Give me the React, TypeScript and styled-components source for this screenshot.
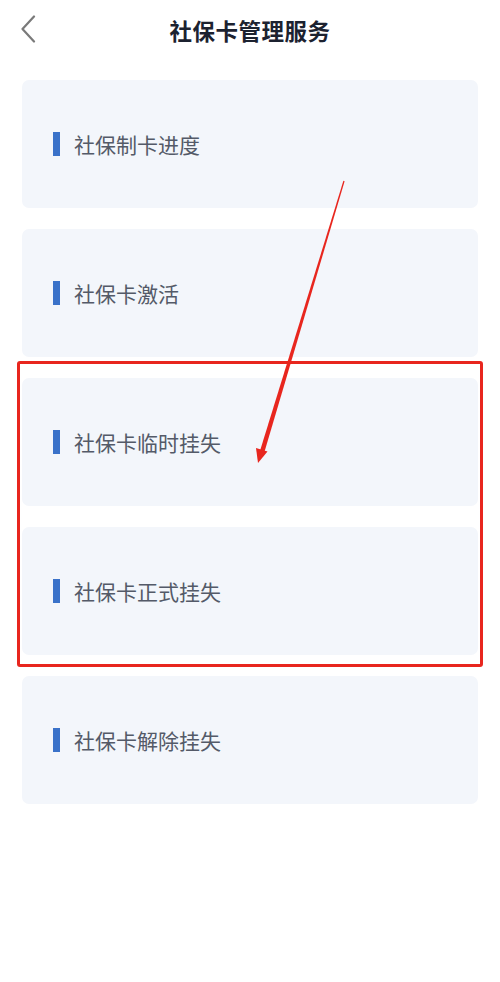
import React from "react";
import styled, { createGlobalStyle } from "styled-components";

const Global = createGlobalStyle`
  html, body { margin: 0; padding: 0; background: #ffffff; }
  body { font-family: "Noto Sans CJK SC", "Noto Sans", sans-serif; }
`;

const Page = styled.div`
  position: relative;
  width: 500px;
  height: 982px;
  background: #ffffff;
  overflow: hidden;
`;

const Header = styled.header`
  height: 60px;
  display: flex;
  align-items: center;
  justify-content: center;
  position: relative;
`;

const BackButton = styled.div`
  position: absolute;
  left: 20px;
  top: 14px;
  width: 18px;
  height: 30px;
  display: flex;
  align-items: center;
`;

const Title = styled.h1`
  margin: 0;
  font-size: 22.5px;
  font-weight: 700;
  color: #1c2230;
  letter-spacing: 0.5px;
  line-height: 1;
`;

const List = styled.div`
  display: flex;
  flex-direction: column;
  gap: 21px;
  padding: 20px 22px 0;
`;

const Highlight = styled.div`
  position: relative;
  display: flex;
  flex-direction: column;
  gap: 21px;
  &::after {
    content: "";
    position: absolute;
    top: -17px;
    bottom: -12px;
    left: -5px;
    right: -5px;
    border: 3px solid #e8261e;
    border-radius: 3px;
    pointer-events: none;
  }
`;

const Card = styled.div`
  height: 128px;
  background: #f3f6fb;
  border-radius: 7px;
  display: flex;
  align-items: center;
  padding-left: 31px;
  box-sizing: border-box;
`;

const Bar = styled.span`
  width: 7px;
  height: 24px;
  background: #3a72c9;
  margin-right: 14px;
  flex-shrink: 0;
`;

const Label = styled.span`
  font-size: 21px;
  color: #545a68;
  line-height: 1;
`;

const ArrowLayer = styled.svg`
  position: absolute;
  left: 0;
  top: 0;
  pointer-events: none;
`;

const Item = ({ text }: { text: string }) => (
  <Card>
    <Bar />
    <Label>{text}</Label>
  </Card>
);

export default function App() {
  return (
    <Page>
      <Global />
      <Header>
        <BackButton>
          <svg width="16" height="28" viewBox="0 0 16 28">
            <path d="M14 1.5 L2.5 14 L14 26.5" fill="none" stroke="#7a7a7a" strokeWidth="2.2" strokeLinecap="round" strokeLinejoin="round" />
          </svg>
        </BackButton>
        <Title>社保卡管理服务</Title>
      </Header>
      <List>
        <Item text="社保制卡进度" />
        <Item text="社保卡激活" />
        <Highlight>
          <Item text="社保卡临时挂失" />
          <Item text="社保卡正式挂失" />
        </Highlight>
        <Item text="社保卡解除挂失" />
      </List>
      <ArrowLayer width="500" height="982" viewBox="0 0 500 982">
        <polygon
          points="344.6,181.2 343.4,180.8 259.8,451.4 264.2,452.8"
          fill="#e8261e"
        />
        <polygon points="258,463 256,448 267.5,451.5" fill="#e8261e" />
      </ArrowLayer>
    </Page>
  );
}
